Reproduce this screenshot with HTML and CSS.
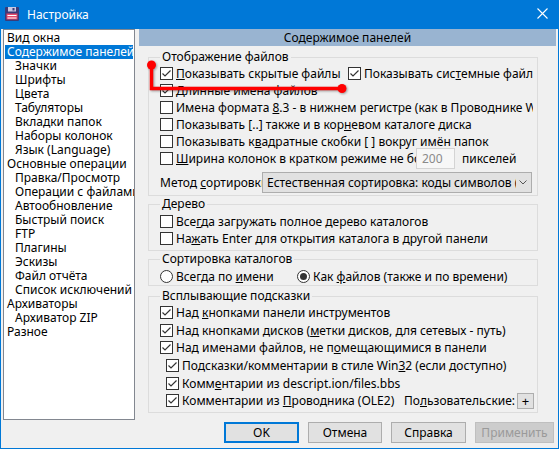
FILE: index.html
```html
<!DOCTYPE html>
<html lang="ru">
<head>
<meta charset="utf-8">
<title>Настройка</title>
<link rel="stylesheet" href="styles.css">
</head>
<body>
<div class="window">
  <div class="titlebar">
    <svg class="app-icon" width="14" height="14" viewBox="0 0 14 14">
      <rect x="0" y="0" width="14" height="14" rx="1" fill="#3b3b78"/>
      <rect x="3" y="0" width="8" height="4.5" fill="#c9c9e2"/>
      <rect x="7.5" y="1" width="2" height="2.5" fill="#3b3b78"/>
      <rect x="1.5" y="6.5" width="11" height="6" fill="#e6496b"/>
      <rect x="2.5" y="8" width="9" height="1" fill="#fff"/>
      <rect x="2.5" y="10.5" width="9" height="1" fill="#fff"/>
    </svg>
    <span class="title">Настройка</span>
    <svg class="close" width="11" height="11" viewBox="0 0 11 11">
      <path d="M0.5 0.5 L10.5 10.5 M10.5 0.5 L0.5 10.5" stroke="#fff" stroke-width="1.1" fill="none"/>
    </svg>
  </div>
  <div class="body">
    <div class="main">
      <ul class="tree">
        <li>Вид окна</li>
        <li class="sel">Содержимое панелей</li>
        <li class="sub">Значки</li>
        <li class="sub">Шрифты</li>
        <li class="sub">Цвета</li>
        <li class="sub">Табуляторы</li>
        <li class="sub">Вкладки папок</li>
        <li class="sub">Наборы колонок</li>
        <li class="sub">Язык (Language)</li>
        <li>Основные операции</li>
        <li class="sub">Правка/Просмотр</li>
        <li class="sub">Операции с файлами</li>
        <li class="sub">Автообновление</li>
        <li class="sub">Быстрый поиск</li>
        <li class="sub">FTP</li>
        <li class="sub">Плагины</li>
        <li class="sub">Эскизы</li>
        <li class="sub">Файл отчёта</li>
        <li class="sub">Список исключений</li>
        <li>Архиваторы</li>
        <li class="sub">Архиватор ZIP</li>
        <li>Разное</li>
      </ul>
      <div class="panel">
        <div class="panel-header">Содержимое панелей</div>

        <fieldset class="group g1">
          <legend>Отображение файлов</legend>
          <div class="row">
            <label class="chk w188"><span class="box"><svg width="11" height="11" viewBox="0 0 11 11"><polyline points="1.5,5.5 4,8 9.5,2.5" fill="none" stroke="#333" stroke-width="1.2"/></svg></span><span class="t"><u>П</u>оказывать скрытые файлы</span></label>
            <label class="chk"><span class="box"><svg width="11" height="11" viewBox="0 0 11 11"><polyline points="1.5,5.5 4,8 9.5,2.5" fill="none" stroke="#333" stroke-width="1.2"/></svg></span><span class="t">Показывать сис<u>т</u>емные файлы</span></label>
          </div>
          <div class="row">
            <label class="chk"><span class="box"><svg width="11" height="11" viewBox="0 0 11 11"><polyline points="1.5,5.5 4,8 9.5,2.5" fill="none" stroke="#333" stroke-width="1.2"/></svg></span><span class="t"><u>Д</u>линные имена файлов</span></label>
          </div>
          <div class="row">
            <label class="chk"><span class="box"></span><span class="t">Имена формата <u>8</u>.3 - в нижнем регистре (как в Проводнике Windows)</span></label>
          </div>
          <div class="row">
            <label class="chk"><span class="box"></span><span class="t">Показывать [..] также и в кор<u>н</u>евом каталоге диска</span></label>
          </div>
          <div class="row">
            <label class="chk"><span class="box"></span><span class="t">Показывать к<u>в</u>адратные скобки [ ] вокруг имён папок</span></label>
          </div>
          <div class="row row-edit">
            <span class="box"></span><span class="clip w240"><u>Ш</u>ирина колонок в кратком режиме не более</span><span class="edit">200</span><span class="after-edit">пикселей</span>
          </div>
          <div class="row combo-row">
            <span class="clip w102">Метод <u>с</u>ортировки:</span>
            <div class="combo">
              <span class="combo-text">Естественная сортировка: коды символов (Unicode)</span>
              <svg class="combo-arrow" width="8" height="5" viewBox="0 0 8 5"><polyline points="0.5,0.5 4,4 7.5,0.5" fill="none" stroke="#555" stroke-width="1"/></svg>
            </div>
          </div>
        </fieldset>

        <fieldset class="group g2">
          <legend>Дерево</legend>
          <div class="row">
            <label class="chk"><span class="box"></span><span class="t">Все<u>г</u>да загружать полное дерево каталогов</span></label>
          </div>
          <div class="row">
            <label class="chk"><span class="box"></span><span class="t">На<u>ж</u>ать Enter для открытия каталога в другой панели</span></label>
          </div>
        </fieldset>

        <fieldset class="group g3">
          <legend>Сортировка каталогов</legend>
          <div class="row">
            <label class="chk w137"><span class="radio"></span><span class="t">Всегда по <u>и</u>мени</span></label>
            <label class="chk"><span class="radio"><span class="dot"></span></span><span class="t">Как <u>ф</u>айлов (также и по времени)</span></label>
          </div>
        </fieldset>

        <fieldset class="group g4">
          <legend>Всплывающие подсказки</legend>
          <div class="row tall">
            <label class="chk"><span class="box"><svg width="11" height="11" viewBox="0 0 11 11"><polyline points="1.5,5.5 4,8 9.5,2.5" fill="none" stroke="#333" stroke-width="1.2"/></svg></span><span class="t">Над <u>к</u>нопками панели инструментов</span></label>
          </div>
          <div class="row tall">
            <label class="chk"><span class="box"><svg width="11" height="11" viewBox="0 0 11 11"><polyline points="1.5,5.5 4,8 9.5,2.5" fill="none" stroke="#333" stroke-width="1.2"/></svg></span><span class="t">Над кнопками дисков (<u>м</u>етки дисков, для сетевых - путь)</span></label>
          </div>
          <div class="row tall">
            <label class="chk"><span class="box"><svg width="11" height="11" viewBox="0 0 11 11"><polyline points="1.5,5.5 4,8 9.5,2.5" fill="none" stroke="#333" stroke-width="1.2"/></svg></span><span class="t">Над именами файлов, не п<u>о</u>мещающимися в панели</span></label>
          </div>
          <div class="row tall indent">
            <label class="chk"><span class="box"><svg width="11" height="11" viewBox="0 0 11 11"><polyline points="1.5,5.5 4,8 9.5,2.5" fill="none" stroke="#333" stroke-width="1.2"/></svg></span><span class="t">Подсказки/комментарии в стиле Win<u>3</u>2 (если доступно)</span></label>
          </div>
          <div class="row tall indent">
            <label class="chk"><span class="box"><svg width="11" height="11" viewBox="0 0 11 11"><polyline points="1.5,5.5 4,8 9.5,2.5" fill="none" stroke="#333" stroke-width="1.2"/></svg></span><span class="t">Комм<u>е</u>нтарии из descript.ion/files.bbs</span></label>
          </div>
          <div class="row tall indent">
            <label class="chk w238"><span class="box"><svg width="11" height="11" viewBox="0 0 11 11"><polyline points="1.5,5.5 4,8 9.5,2.5" fill="none" stroke="#333" stroke-width="1.2"/></svg></span><span class="t">Комментарии из <u>П</u>роводника (OLE2)</span></label>
            <span class="custom">По<u>л</u>ьзовательские:</span>
            <span class="plus">+</span>
          </div>
        </fieldset>
      </div>
    </div>
    <div class="buttons">
      <button class="btn ok w75">OK</button>
      <button class="btn w74">Отмена</button>
      <button class="btn w75">Справка</button>
      <button class="btn disabled w79">Применить</button>
    </div>
  </div>
</div>
<svg class="annotation" width="559" height="451" viewBox="0 0 559 451">
  <path d="M151.5 65 V88.5 H342" fill="none" stroke="#f00" stroke-width="3.5" stroke-linejoin="miter"/>
  <circle cx="151.5" cy="65" r="4.5" fill="#f00"/>
  <circle cx="342" cy="88.5" r="4.5" fill="#f00"/>
</svg>
</body>
</html>
```

FILE: styles.css
```css
* {
  box-sizing: border-box;
}

body {
  margin: 0;
  background: #ffffff;
  font-family: "Noto Sans", "Open Sans", sans-serif;
  font-size: 12px;
  color: #000;
}

.window {
  width: 559px;
  height: 449px;
  background: #f0f0f0;
  border: 1px solid #0078d7;
  border-top: none;
  display: flex;
  flex-direction: column;
  overflow: hidden;
}

.titlebar {
  flex: none;
  height: 29px;
  background: #0078d7;
  color: #fff;
  display: flex;
  align-items: center;
  padding-left: 4px;
  padding-right: 10px;
}

.app-icon {
  display: block;
  flex: none;
  margin-top: -1px;
}

.title {
  margin-left: 8px;
  flex: 1;
  line-height: 16px;
}

.close {
  display: block;
  margin-top: -2px;
}

.body {
  flex: 1;
  padding: 0 2px 0 2px;
  display: flex;
  flex-direction: column;
}

.main {
  height: 391px;
  display: flex;
  gap: 4px;
  flex: none;
}

.tree {
  list-style: none;
  margin: 0;
  width: 132px;
  height: 391px;
  padding: 1px 1px 0 1px;
  background: #fff;
  border: 1px solid #828790;
  flex: none;
  overflow: hidden;
}

.tree li {
  height: 14px;
  line-height: 14px;
  padding-left: 2px;
  white-space: nowrap;
}

.tree li.sub {
  padding-left: 10px;
}

.tree li.sel {
  background: #0078d7;
  color: #fff;
}

.panel {
  flex: 1;
  display: flex;
  flex-direction: column;
  min-width: 0;
}

.panel-header {
  height: 17px;
  line-height: 17px;
  background: #99b4d1;
  text-align: center;
  flex: none;
}

.group {
  margin: 1px 0 0 9px;
  width: 390px;
  min-width: 0;
  border: 1px solid #dcdcdc;
  padding: 2px 4px 2px 11px;
  flex: none;
}

.group legend {
  padding: 0 2px;
  height: 14px;
  line-height: 14px;
}

.g1 {
  margin-top: 4px;
  padding-top: 1px;
}

.g2 {
  padding-bottom: 3px;
}

.g3 {
  padding-bottom: 0;
}

.g4 {
  margin-top: 3px;
  padding-top: 1px;
  padding-right: 3px;
}

.row {
  display: flex;
  align-items: center;
  height: 17px;
  white-space: nowrap;
  overflow: hidden;
}

.row.tall {
  height: 17.6px;
}

.row.indent {
  padding-left: 6px;
}

.chk {
  display: flex;
  align-items: center;
  flex: none;
}

.t {
  white-space: pre;
}

.w188 { width: 188px; }
.w137 { width: 137px; }
.w238 { width: 238px; }

.box {
  width: 13px;
  height: 13px;
  border: 1px solid #333;
  background: #fff;
  margin-right: 3px;
  flex: none;
}

.box svg {
  display: block;
}

.radio {
  width: 13px;
  height: 13px;
  border: 1px solid #333;
  border-radius: 50%;
  background: #fff;
  margin-right: 3px;
  flex: none;
  display: flex;
  align-items: center;
  justify-content: center;
}

.dot {
  width: 7px;
  height: 7px;
  border-radius: 50%;
  background: #333;
}

.clip {
  overflow: hidden;
  white-space: nowrap;
  flex: none;
}

.w240 { width: 240px; }
.w102 { width: 102px; }

.row-edit {
  overflow: visible;
}

.edit {
  flex: none;
  width: 39px;
  height: 21px;
  line-height: 19px;
  padding-left: 5px;
  border: 1px solid #d4d4d4;
  background: #f7f7f7;
  color: #8a8a8a;
}

.after-edit {
  margin-left: 7px;
}

.combo-row {
  height: 21px;
  margin-top: 5px;
  overflow: visible;
}

.combo {
  flex: none;
  width: 270px;
  height: 21px;
  border: 1px solid #adadad;
  background: #e1e1e1;
  display: flex;
  align-items: center;
  padding-left: 4px;
  padding-right: 4px;
}

.combo-text {
  flex: 1;
  overflow: hidden;
  white-space: nowrap;
}

.combo-arrow {
  display: block;
  margin-left: 3px;
  flex: none;
}

.custom {
  flex: none;
}

.plus {
  margin-left: auto;
  flex: none;
  width: 17px;
  height: 16px;
  border: 1px solid #adadad;
  background: #e1e1e1;
  display: flex;
  align-items: center;
  justify-content: center;
  font-size: 13px;
  line-height: 14px;
}

.buttons {
  display: flex;
  justify-content: flex-end;
  gap: 9px;
  padding-top: 2px;
  padding-right: 2px;
}

.btn {
  font: inherit;
  height: 21px;
  padding: 0;
  border: 1px solid #adadad;
  background: #e1e1e1;
  color: #000;
}

.btn.ok {
  border: 2px solid #0078d7;
}

.btn.disabled {
  background: #cccccc;
  border-color: #bfbfbf;
  color: #9a9a9a;
}

.w75 { width: 75px; }
.w74 { width: 74px; }
.w79 { width: 79px; }

.annotation {
  position: absolute;
  left: 0;
  top: 0;
  pointer-events: none;
  filter: drop-shadow(1px 1px 1px rgba(0, 0, 0, 0.35));
}
```
